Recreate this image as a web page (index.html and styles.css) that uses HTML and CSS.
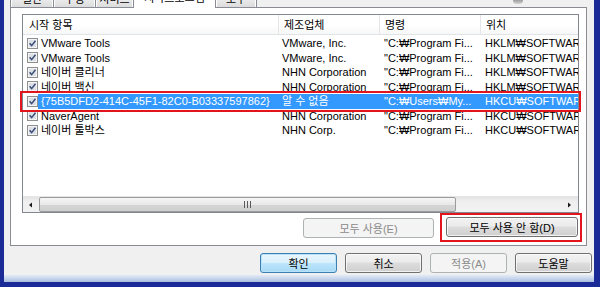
FILE: index.html
```html
<!DOCTYPE html>
<html lang="ko">
<head>
    <meta charset="UTF-8">
    <meta name="viewport" content="width=device-width, initial-scale=1.0">
    <title>시스템 구성</title>
    <link rel="stylesheet" href="styles.css">
</head>
<body>
    <div class="frame">
        <div class="dialog">
            <div class="tabs">
                <div class="tab tab-general">일반</div>
                <div class="tab tab-boot">부팅</div>
                <div class="tab tab-services">서비스</div>
                <div class="tab tab-startup active">시작프로그램</div>
                <div class="tab tab-tools">도구</div>
                <div class="cursor"></div>
            </div>

            <div class="panel">
                <div class="list">
                    <div class="list-head">
                        <div class="col">시작 항목</div>
                        <div class="col">제조업체</div>
                        <div class="col">명령</div>
                        <div class="col">위치</div>
                    </div>

                    <div class="rows">
                        <div class="row">
                            <div class="col first">
                                <svg class="cb" viewBox="0 0 11 11"><rect x="0.5" y="0.5" width="10" height="10" fill="#f4f4f4" stroke="#8e8f8f"/><rect x="2" y="2" width="7" height="7" fill="#dde1e7"/><path d="M2.6 5.3 4.6 7.6 8.5 2.7" fill="none" stroke="#3c4f7a" stroke-width="1.5"/></svg>
                                <span class="name">VMware Tools</span>
                            </div>
                            <div class="col">VMware, Inc.</div>
                            <div class="col">"C:₩Program Fi...</div>
                            <div class="col">HKLM₩SOFTWARE</div>
                        </div>
                        <div class="row">
                            <div class="col first">
                                <svg class="cb" viewBox="0 0 11 11"><rect x="0.5" y="0.5" width="10" height="10" fill="#f4f4f4" stroke="#8e8f8f"/><rect x="2" y="2" width="7" height="7" fill="#dde1e7"/><path d="M2.6 5.3 4.6 7.6 8.5 2.7" fill="none" stroke="#3c4f7a" stroke-width="1.5"/></svg>
                                <span class="name">VMware Tools</span>
                            </div>
                            <div class="col">VMware, Inc.</div>
                            <div class="col">"C:₩Program Fi...</div>
                            <div class="col">HKLM₩SOFTWARE</div>
                        </div>
                        <div class="row">
                            <div class="col first">
                                <svg class="cb" viewBox="0 0 11 11"><rect x="0.5" y="0.5" width="10" height="10" fill="#f4f4f4" stroke="#8e8f8f"/><rect x="2" y="2" width="7" height="7" fill="#dde1e7"/><path d="M2.6 5.3 4.6 7.6 8.5 2.7" fill="none" stroke="#3c4f7a" stroke-width="1.5"/></svg>
                                <span class="name">네이버 클리너</span>
                            </div>
                            <div class="col">NHN Corporation</div>
                            <div class="col">"C:₩Program Fi...</div>
                            <div class="col">HKLM₩SOFTWARE</div>
                        </div>
                        <div class="row">
                            <div class="col first">
                                <svg class="cb" viewBox="0 0 11 11"><rect x="0.5" y="0.5" width="10" height="10" fill="#f4f4f4" stroke="#8e8f8f"/><rect x="2" y="2" width="7" height="7" fill="#dde1e7"/><path d="M2.6 5.3 4.6 7.6 8.5 2.7" fill="none" stroke="#3c4f7a" stroke-width="1.5"/></svg>
                                <span class="name">네이버 백신</span>
                            </div>
                            <div class="col">NHN Corporation</div>
                            <div class="col">"C:₩Program Fi...</div>
                            <div class="col">HKLM₩SOFTWARE</div>
                        </div>
                        <div class="row sel">
                            <div class="col first">
                                <svg class="cb" viewBox="0 0 11 11"><rect x="0.5" y="0.5" width="10" height="10" fill="#f4f4f4" stroke="#8e8f8f"/><rect x="2" y="2" width="7" height="7" fill="#dde1e7"/><path d="M2.6 5.3 4.6 7.6 8.5 2.7" fill="none" stroke="#3c4f7a" stroke-width="1.5"/></svg>
                                <span class="name">{75B5DFD2-414C-45F1-82C0-B03337597862}</span>
                            </div>
                            <div class="col">알 수 없음</div>
                            <div class="col">"C:₩Users₩My...</div>
                            <div class="col">HKCU₩SOFTWARE</div>
                        </div>
                        <div class="row">
                            <div class="col first">
                                <svg class="cb" viewBox="0 0 11 11"><rect x="0.5" y="0.5" width="10" height="10" fill="#f4f4f4" stroke="#8e8f8f"/><rect x="2" y="2" width="7" height="7" fill="#dde1e7"/><path d="M2.6 5.3 4.6 7.6 8.5 2.7" fill="none" stroke="#3c4f7a" stroke-width="1.5"/></svg>
                                <span class="name">NaverAgent</span>
                            </div>
                            <div class="col">NHN Corporation</div>
                            <div class="col">"C:₩Program Fi...</div>
                            <div class="col">HKCU₩SOFTWARE</div>
                        </div>
                        <div class="row">
                            <div class="col first">
                                <svg class="cb" viewBox="0 0 11 11"><rect x="0.5" y="0.5" width="10" height="10" fill="#f4f4f4" stroke="#8e8f8f"/><rect x="2" y="2" width="7" height="7" fill="#dde1e7"/><path d="M2.6 5.3 4.6 7.6 8.5 2.7" fill="none" stroke="#3c4f7a" stroke-width="1.5"/></svg>
                                <span class="name">네이버 툴박스</span>
                            </div>
                            <div class="col">NHN Corp.</div>
                            <div class="col">"C:₩Program Fi...</div>
                            <div class="col">HKCU₩SOFTWARE</div>
                        </div>
                    </div>

                    <div class="hscroll">
                        <div class="arrow">
                            <svg width="15" height="16" viewBox="0 0 15 16"><path d="M9 5.5 6 8 9 10.5Z" fill="#1a1a1a"/></svg>
                        </div>
                        <div class="track">
                            <div class="thumb">
                                <svg width="9" height="7" viewBox="0 0 9 7"><path d="M1.5 0v7M4.5 0v7M7.5 0v7" stroke="#5b5b5b" stroke-width="1"/></svg>
                            </div>
                        </div>
                        <div class="arrow">
                            <svg width="16" height="16" viewBox="0 0 16 16"><path d="M6 5.5 9 8 6 10.5Z" fill="#1a1a1a"/></svg>
                        </div>
                    </div>
                </div>

                <div class="list-actions">
                    <button class="btn wide" disabled>모두 사용(E)</button>
                    <span class="mark">
                        <button class="btn wide">모두 사용 안 함(D)</button>
                    </span>
                </div>
            </div>

            <div class="dialog-buttons">
                <button class="btn default">확인</button>
                <button class="btn">취소</button>
                <button class="btn" disabled>적용(A)</button>
                <button class="btn">도움말</button>
            </div>
        </div>
        <div class="glass"></div>
    </div>
</body>
</html>
```

FILE: styles.css
```css
body {
    margin: 0;
    width: 600px;
    height: 287px;
    overflow: hidden;
    font-family: "Liberation Sans", "Noto Sans CJK KR", sans-serif;
    font-size: 11px;
    color: #000;
}

.frame {
    height: 287px;
    box-sizing: border-box;
    background: #1a2b97;
    padding: 0 6px 5px 4px;
    display: flex;
    flex-direction: column;
}

.dialog {
    flex: 1;
    background: #f0f0f0;
    display: flex;
    flex-direction: column;
    padding: 0 7px 0 6px;
}

.glass {
    height: 7px;
    background: linear-gradient(#e3eaf5, #c4d3ea 55%, #a9bddd);
}

/* tabs (only the lower edge shows) */
.tabs {
    height: 7px;
    display: flex;
    align-items: flex-end;
}

.tab {
    box-sizing: border-box;
    height: 16px;
    line-height: 15px;
    text-align: center;
    border: 1px solid #898c95;
    border-bottom: none;
    background: linear-gradient(#f2f2f2, #ebebeb 50%, #dcdcdc);
    box-shadow: inset 1px 0 #fff, inset -1px 0 #fff;
    margin-right: -1px;
    color: #000;
}

.tab-general { width: 44px; }
.tab-boot { width: 43px; }
.tab-services { width: 39px; }
.tab-tools { width: 42px; }

.tab-startup {
    width: 83px;
}

.tab.active {
    height: 18px;
    margin-bottom: -1px;
    padding-bottom: 2px;
    background: #fff;
    box-shadow: none;
    position: relative;
    z-index: 1;
}

.cursor {
    align-self: flex-start;
    margin-left: auto;
    margin-right: 64px;
    width: 10px;
    height: 4px;
    border-radius: 0 0 5px 5px;
    background: linear-gradient(#9c9c9c, #d4d4d4);
}

/* tab page */
.panel {
    background: #fff;
    border: 1px solid #898c95;
    padding: 6px 7px 3px 11px;
    display: flex;
    flex-direction: column;
}

.list {
    height: 199px;
    box-sizing: border-box;
    border: 1px solid #828790;
    display: flex;
    flex-direction: column;
}

.list-head,
.row {
    display: grid;
    grid-template-columns: 255px 101px 101px 98px;
}

.list-head {
    height: 20px;
    line-height: 20px;
    box-sizing: border-box;
    border-bottom: 1px solid #e2e3e5;
    background: linear-gradient(#fff, #fff 55%, #f6f7f8);
}

.list-head .col {
    padding-left: 5px;
    border-left: 1px solid #e5e5e5;
}

.list-head .col:first-child {
    padding-left: 6px;
    border-left: none;
}

.rows {
    flex: 1;
    padding-top: 1px;
}

.row {
    height: 14.5px;
    line-height: 14.5px;
}

.col {
    white-space: nowrap;
    overflow: hidden;
    padding-left: 5px;
}

.row .col:nth-child(2) {
    padding-left: 4px;
}

.col.first {
    display: flex;
    align-items: center;
    padding-left: 4px;
}

.cb {
    width: 11px;
    height: 11px;
    flex: none;
}

.name {
    flex: 1;
    padding-left: 3px;
    overflow: hidden;
}

.row.sel {
    outline: 2px solid #e2141c;
    outline-offset: 1px;
    position: relative;
    z-index: 1;
}

.row.sel .name,
.row.sel .col:not(.first) {
    background: #3399ff;
    color: #fff;
}

/* horizontal scroll bar */
.hscroll {
    height: 16px;
    display: flex;
    background: linear-gradient(#e3e3e3, #efefef 30%, #f2f2f2);
    border-top: 1px solid #e6e6e6;
    box-sizing: border-box;
}

.arrow {
    display: flex;
    align-items: center;
}

.track {
    flex: 1;
    display: flex;
    padding: 0 1px;
}

.thumb {
    width: 417px;
    box-sizing: border-box;
    border: 1px solid #9b9b9b;
    border-radius: 2px;
    background: linear-gradient(#f6f6f6, #e8e8e8 50%, #d6d6d6 51%, #cfcfcf);
    display: flex;
    align-items: center;
    justify-content: center;
}

/* buttons */
.btn {
    box-sizing: border-box;
    width: 77px;
    height: 20px;
    padding: 0;
    font-family: inherit;
    font-size: 11px;
    color: #000;
    border: 1px solid #707070;
    border-radius: 3px;
    background: linear-gradient(#f2f2f2, #ebebeb 45%, #dddddd 50%, #cfcfcf);
    box-shadow: inset 0 0 0 1px rgba(255, 255, 255, 0.7);
}

.btn:disabled {
    color: #8b8b8b;
    border-color: #adb2b5;
    background: #f4f4f4;
    box-shadow: none;
}

.btn.default {
    border-color: #3c7fb1;
    background: linear-gradient(#eaf6fd, #d9f0fc 50%, #bee6fd 50%, #a7d9f5);
    box-shadow: inset 0 0 0 1px #b9e2f8;
}

.btn.wide {
    width: 131px;
}

.list-actions {
    height: 29px;
    display: flex;
    align-items: center;
    justify-content: flex-end;
    gap: 6px;
    margin-right: -3px;
}

.mark {
    display: flex;
    border: 2px solid #e2141c;
    padding: 2px 2px 3px 4px;
}

.mark .btn {
    width: 132px;
}

.dialog-buttons {
    display: flex;
    justify-content: flex-end;
    gap: 8px;
    padding-top: 7px;
    margin-right: -5px;
}
```
